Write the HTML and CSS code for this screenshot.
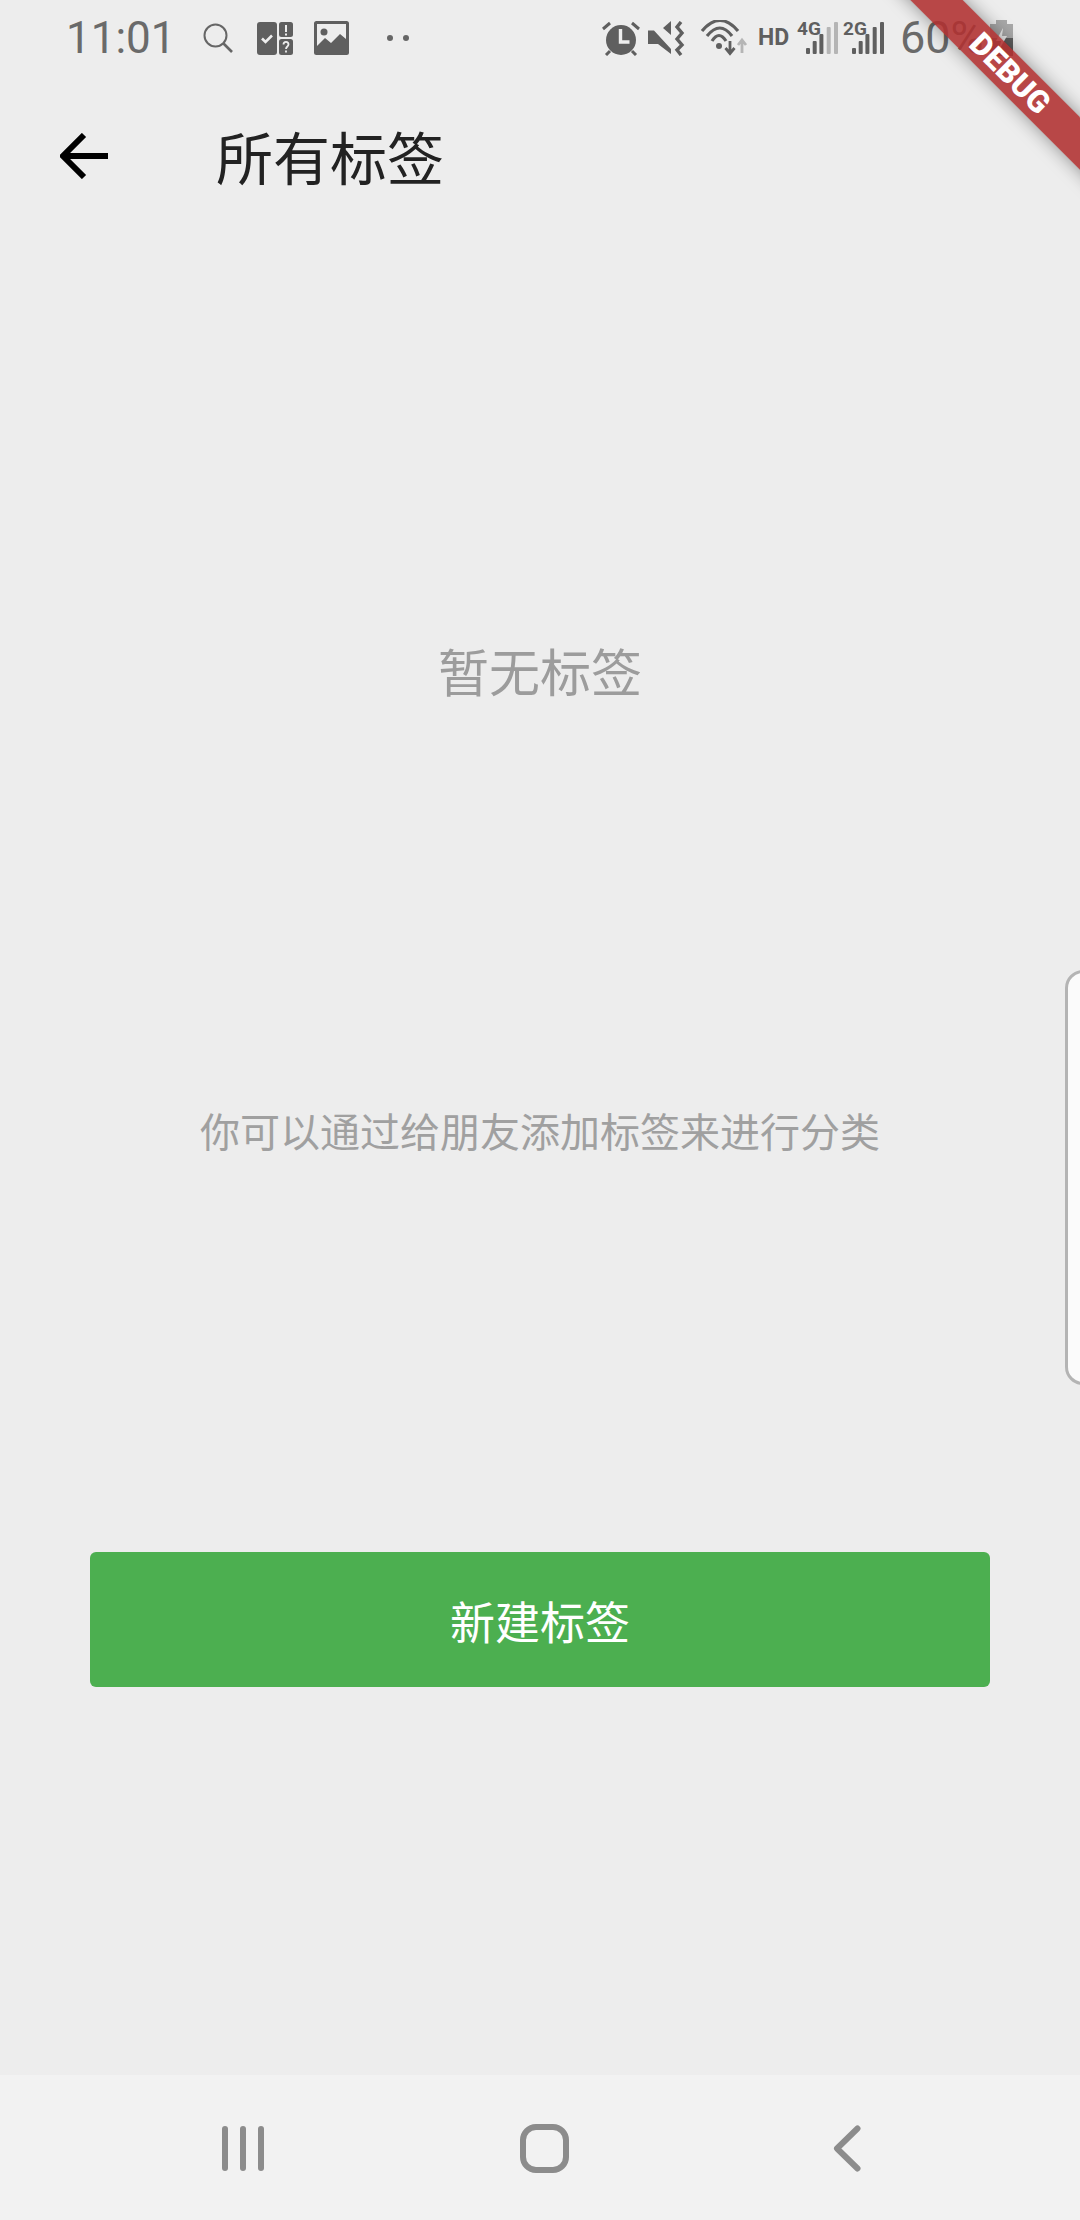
FILE: index.html
```html
<!DOCTYPE html>
<html lang="zh">
<head>
<meta charset="utf-8">
<title>所有标签</title>
<link rel="stylesheet" href="styles.css">
</head>
<body>
<div class="screen">
  <header class="status">
    <span class="time">11:01</span>
    <svg class="ic ic-search" width="30" height="30" viewBox="0 0 30 30"><circle cx="12.5" cy="12.5" r="11" fill="none" stroke="#666" stroke-width="2"/><path d="M20.5 20.5L29 29" stroke="#666" stroke-width="2.6" fill="none"/></svg>
    <svg class="ic ic-notes" width="36" height="33" viewBox="0 0 36 33"><rect width="20" height="33" rx="3" fill="#5f5f5f"/><rect x="22" width="14" height="15" rx="2.5" fill="#5f5f5f"/><rect x="22" y="17" width="14" height="16" rx="2.5" fill="#5f5f5f"/><path d="M5 16.5l3.5 3.5L15 13.5" stroke="#eee" stroke-width="2.6" fill="none"/><path d="M29 3v7M29 11.5v2" stroke="#eee" stroke-width="2" fill="none"/><path d="M26.5 22.5c0-3.500 5-3.500 5 0 0 2-2.500 2-2.500 4.500M29 28.500v2" stroke="#eee" stroke-width="1.800" fill="none"/></svg>
    <svg class="ic ic-picture" width="35" height="34" viewBox="0 0 35 34"><path d="M2.500 0h30A2.500 2.500 0 0 1 35 2.500v29a2.500 2.500 0 0 1-2.500 2.500h-30A2.500 2.500 0 0 1 0 31.500v-29A2.500 2.500 0 0 1 2.500 0zM3 3v22l8-8 6 5 9-9 6 5V3z" fill="#5f5f5f" fill-rule="evenodd"/><circle cx="10" cy="11" r="3.500" fill="#5f5f5f"/></svg>
    <span class="more"><i></i><i></i></span>
    <div class="status-right">
      <svg class="ic" width="38" height="36" viewBox="0 0 38 36"><circle cx="19" cy="20" r="15" fill="#5f5f5f"/><path d="M18.500 9v13h9" stroke="#eee" stroke-width="3.400" fill="none"/><path d="M1 9l7-6M37 9l-7-6M4 35l4-4M34 35l-4-4" stroke="#5f5f5f" stroke-width="3" fill="none"/></svg>
      <svg class="ic ic-mute" width="38" height="35" viewBox="0 0 38 35"><path d="M15 7l8-7v14zM0 9.500h6L23 28v5L10 23H0z" fill="#5f5f5f"/><path d="M33 1l-4 5 5 6-5 6 5 6-5 5 4 5" stroke="#5f5f5f" stroke-width="3.400" fill="none"/></svg>
      <svg class="ic ic-wifi" width="48" height="36" viewBox="0 0 48 36"><g fill="none" stroke="#5f5f5f" stroke-width="3.200"><path d="M2 11Q20-10 38 11"/><path d="M7 16Q20 0 32 16"/><path d="M12 21Q19 10 26 21"/></g><circle cx="19" cy="26" r="3" fill="#5f5f5f"/><path d="M30 21v13M25.500 28l4.500 5.500 4.500-5.500" fill="none" stroke="#5f5f5f" stroke-width="2.800"/><path d="M42 33V21M38 25l4-5 4 5" fill="none" stroke="#b5b5b5" stroke-width="2.800"/></svg>
      <span class="hd">HD</span>
      <div class="signal signal-first">
        <span class="net">4G</span>
        <svg width="32" height="32" viewBox="0 0 32 32"><g fill="#5f5f5f"><rect y="26" width="4" height="6" rx="1"/><rect x="6.700" y="19" width="4" height="13" rx="1"/><rect x="13.400" y="12" width="4" height="20" rx="1"/></g><g fill="#b5b5b5"><rect x="20.700" y="5" width="4" height="27" rx="1"/><rect x="28" width="4" height="32" rx="1"/></g></svg>
      </div>
      <div class="signal">
        <span class="net">2G</span>
        <svg width="32" height="32" viewBox="0 0 32 32"><g fill="#5f5f5f"><rect y="26" width="4" height="6" rx="1"/><rect x="6.700" y="19" width="4" height="13" rx="1"/><rect x="13.400" y="12" width="4" height="20" rx="1"/><rect x="20.700" y="5" width="4" height="27" rx="1"/><rect x="28" width="4" height="32" rx="1"/></g></svg>
      </div>
      <span class="pct">60%</span>
      <svg class="ic ic-batt" width="23" height="36" viewBox="0 0 23 36"><path d="M6 0h11v4h6v14H0V4h6z" fill="#a8a8a8"/><path d="M0 18h23v18H0z" fill="#5f5f5f"/><path d="M13 8L6 21h5l-2 9 8-14h-5z" fill="#eee"/></svg>
    </div>
  </header>

  <div class="appbar">
    <svg class="back" width="48" height="46" viewBox="0 0 48 46"><path d="M48 23H4M24 2L3 23l21 21" fill="none" stroke="#000" stroke-width="6"/></svg>
    <h1 class="title">所有标签</h1>
  </div>

  <main class="main">
    <h2 class="empty">暂无标签</h2>
    <p class="hint">你可以通过给朋友添加标签来进行分类</p>
    <button class="btn" type="button">新建标签</button>
  </main>

  <nav class="nav">
    <span class="recent"><i></i><i></i><i></i></span>
    <span class="home"></span>
    <svg class="nav-back" width="28" height="47" viewBox="0 0 28 47"><path d="M24.500 3.500L4 23.500l20.500 20" fill="none" stroke="#8c8c8c" stroke-width="6" stroke-linecap="round" stroke-linejoin="round"/></svg>
  </nav>

  <div class="edge-panel"></div>
  <div class="ribbon"><span>DEBUG</span></div>
</div>
</body>
</html>
```
FILE: styles.css
```css
* { box-sizing: border-box; }
html, body { margin: 0; padding: 0; }
body { width: 1080px; height: 2220px; overflow: hidden; background: #eeeeee; font-family: "Noto Sans CJK SC", "Noto Sans", sans-serif; }
.screen { position: relative; width: 1080px; height: 2220px; display: flex; flex-direction: column; overflow: hidden; background: #ededed; }

.status { height: 76px; flex: none; display: flex; align-items: center; padding: 0 67px 0 66px; }
.time { width: 137px; font: 400 44px/76px Roboto, sans-serif; color: #6a6a6a; }
.ic { display: block; flex: none; }
.ic-notes { margin-left: 24px; }
.ic-picture { margin-left: 21px; }
.more { display: flex; gap: 10px; margin-left: 38px; }
.more i { width: 6px; height: 6px; border-radius: 50%; background: #666; }
.status-right { margin-left: auto; display: flex; align-items: center; }
.ic-mute { margin-left: 8px; }
.ic-wifi { margin-left: 14px; }
.hd { width: 29px; margin-left: 10px; font: 700 23px/30px Roboto, sans-serif; color: #5f5f5f; white-space: nowrap; }
.signal { position: relative; width: 32px; height: 32px; margin-left: 14px; }
.signal-first { margin-left: 19px; }
.signal svg { display: block; }
.net { position: absolute; left: -9px; top: -3px; font: 700 19px/20px Roboto, sans-serif; color: #5f5f5f; }
.pct { width: 90px; margin-left: 16px; font: 400 45px/76px Roboto, sans-serif; color: #6a6a6a; }
.ic-batt { margin-left: 0; }

.appbar { height: 164px; flex: none; display: flex; align-items: center; padding-left: 60px; }
.back { display: block; margin-top: -4px; }
.title { margin: -6px 0 0 108px; font-size: 57px; line-height: 80px; font-weight: 400; color: #222; }

.main { flex: 1; display: flex; flex-direction: column; align-items: center; }
.empty { margin: 394px 0 0; font-size: 51px; line-height: 72px; font-weight: 400; color: #9c9c9c; }
.hint { margin: 394px 0 0; font-size: 40px; line-height: 60px; color: #a0a0a0; }
.btn { margin-top: 392px; width: 900px; height: 135px; border: 0; border-radius: 6px; background: #4caf50; color: #fff; font: 400 45px/60px "Noto Sans CJK SC", sans-serif; padding: 2px 0 0; }

.nav { height: 145px; flex: none; background: #f2f2f2; position: relative; display: flex; align-items: center; padding: 0 0 0 222px; }
.recent { display: flex; gap: 12px; margin-top: 2px; }
.recent i { width: 6px; height: 45px; border-radius: 3px; background: #8c8c8c; }
.home { width: 49px; height: 49px; margin-left: 256px; margin-top: 2px; border: 6px solid #8c8c8c; border-radius: 16px; }
.nav-back { display: block; margin-left: 264px; margin-top: 2px; }

.edge-panel { position: absolute; left: 1065px; top: 970px; width: 30px; height: 415px; background: #fbfbfb; border: 3px solid #b4b4b4; border-radius: 18px 0 0 18px; }

.ribbon { position: absolute; left: 860px; top: 55px; width: 300px; height: 37px; background: rgba(176, 48, 48, .88); box-shadow: 0 0 18px rgba(0, 0, 0, .4); transform: rotate(45deg); display: flex; align-items: center; justify-content: center; color: #fff; font: 900 31px/37px Roboto, sans-serif; }
```
